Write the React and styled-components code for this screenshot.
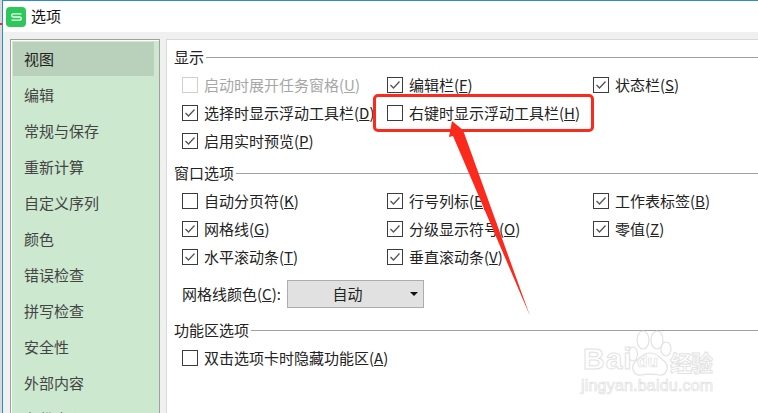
import styled, { createGlobalStyle } from 'styled-components'

const GlobalStyle = createGlobalStyle`
  html, body {
    margin: 0;
    padding: 0;
    background: #fff;
  }
  body {
    width: 758px;
    height: 413px;
    overflow: hidden;
    font-family: "Noto Sans CJK SC", "Noto Sans", sans-serif;
    font-size: 15px;
    color: #222;
  }
`

const Desktop = styled.div`
  position: relative;
  width: 758px;
  height: 413px;
  overflow: hidden;
  display: flex;
  background: #d9d9d9;
`

const DesktopTick = styled.span`
  position: absolute;
  left: 0;
  top: 23px;
  width: 2px;
  height: 2px;
  background: #e8302a;
`

const Window = styled.div`
  flex: 1;
  margin-left: 2px;
  display: flex;
  flex-direction: column;
  border-left: 1px solid #2a8ad4;
  border-top: 1px solid #2a8ad4;
  background: #f0f0f0;
  min-width: 0;
`

const TitleBar = styled.div`
  height: 31px;
  flex: none;
  display: flex;
  align-items: center;
  gap: 5px;
  padding-left: 3px;
  background: #fff;
  color: #111;
`

const Logo = styled.div`
  width: 20px;
  height: 20px;
  border-radius: 4px;
  background: #2fc65c;
  display: flex;
  align-items: center;
  justify-content: center;
`

const Main = styled.div`
  flex: 1;
  display: flex;
  gap: 6px;
  padding: 7px 0 0 7px;
  min-height: 0;
`

const Sidebar = styled.div`
  box-sizing: border-box;
  width: 150px;
  flex: none;
  border: 1px solid #a0a0a0;
  border-bottom: none;
  background: #cce8cf;
  box-shadow: inset 1px 1px 0 #fff;
  padding: 2px 2px 0 2px;
  overflow: hidden;
`

const SideItem = styled.div`
  height: 34px;
  margin: 0 3px 2px 0;
  padding: 0 0 2px 11px;
  box-sizing: border-box;
  display: flex;
  align-items: center;
  color: ${p => (p.$active ? '#222' : '#444')};
  background: ${p => (p.$active ? '#b9d1ba' : 'transparent')};
  white-space: nowrap;
`

const Panel = styled.div`
  flex: 1;
  min-width: 0;
  background: #fff;
  border-top: 1px solid #d8d8d8;
  border-left: 1px solid #d8d8d8;
  padding: 8px 0 0 7px;
`

const Heading = styled.div`
  height: 18px;
  margin-top: ${p => p.$top || 0}px;
  display: flex;
  align-items: center;
  gap: 2px;
  white-space: nowrap;
  &::after {
    content: '';
    flex: 1;
    height: 1px;
    background: #a0a0a0;
  }
`

const HeadingText = styled.span`
  padding-bottom: 2px;
`

const OptionGrid = styled.div`
  display: grid;
  grid-template-columns: 205px 206px 1fr;
  grid-auto-rows: 28px;
  margin-top: 5px;
  padding-left: 8px;
`

const Option = styled.div`
  display: flex;
  align-items: center;
  gap: 6px;
  white-space: nowrap;
  color: ${p => (p.$disabled ? '#a6a6a6' : '#222')};
`

const OptionText = styled.span`
  padding-bottom: 2px;
`

const Box = styled.span`
  width: 14px;
  height: 14px;
  flex: none;
  border: 1px solid ${p => (p.$disabled ? '#cfcfcf' : '#3c3c3c')};
  background: #fff;
  display: flex;
  align-items: center;
  justify-content: center;
`

const ColorRow = styled.div`
  display: flex;
  align-items: center;
  height: 28px;
  margin-top: 9px;
  padding-left: 8px;
  white-space: nowrap;
`

const Select = styled.div`
  position: relative;
  width: 119px;
  height: 26px;
  margin-left: 6px;
  border: 1px solid #adadad;
  background: #e1e1e1;
  display: flex;
  align-items: center;
  justify-content: center;
  padding-right: 16px;
`

const Caret = styled.span`
  position: absolute;
  right: 5px;
  top: 11px;
  width: 0;
  height: 0;
  border-left: 4px solid transparent;
  border-right: 4px solid transparent;
  border-top: 4px solid #111;
`

const Highlight = styled.div`
  position: absolute;
  left: 373px;
  top: 94px;
  width: 215px;
  height: 32px;
  border: 3px solid #fb2a1c;
  border-radius: 5px;
`

const Arrow = styled.svg`
  position: absolute;
  left: 0;
  top: 0;
  pointer-events: none;
`

const Watermark = styled.div`
  position: absolute;
  left: 581px;
  top: 330px;
  width: 140px;
  height: 70px;
  color: #fff;
  -webkit-text-stroke: 1px #e2e2e2;
  font-family: "Liberation Sans", sans-serif;
`

const MarkBai = styled.span`
  position: absolute;
  left: 2px;
  top: 12px;
  font-size: 30px;
  font-weight: 700;
  letter-spacing: 1px;
`

const MarkDu = styled.span`
  position: absolute;
  left: 56px;
  top: 22px;
  font-size: 17px;
  font-weight: 700;
  -webkit-text-stroke: 0.7px #e2e2e2;
`

const MarkCn = styled.span`
  position: absolute;
  left: 89px;
  top: 15px;
  font-family: "Noto Sans CJK SC", sans-serif;
  font-size: 22px;
  font-weight: 700;
  white-space: nowrap;
  letter-spacing: -1px;
`

const MarkUrl = styled.span`
  position: absolute;
  left: 0;
  top: 47px;
  font-size: 16px;
  letter-spacing: 0.2px;
  -webkit-text-stroke: 0.7px #e0e0e0;
  white-space: nowrap;
`

const Paw = styled.svg`
  position: absolute;
  left: 44px;
  top: 0;
`

const sideItems = ['视图', '编辑', '常规与保存', '重新计算', '自定义序列', '颜色', '错误检查', '拼写检查', '安全性', '外部内容', '备份中心']

function Check() {
  return (
    <svg width="12" height="10" viewBox="0 0 12 10">
      <path d="M1.5 5 L4.5 8 L10.5 1.5" fill="none" stroke="#555" strokeWidth="1.3" />
    </svg>
  )
}

// label + hotkey, the hotkey letter is underlined
function Item({ label, k, checked, disabled }) {
  return (
    <Option $disabled={disabled}>
      <Box $disabled={disabled}>{checked && <Check />}</Box>
      <OptionText>{label}(<u>{k}</u>)</OptionText>
    </Option>
  )
}

export default function App() {
  return (
    <>
      <GlobalStyle />
      <Desktop>
        <DesktopTick />
        <Window>
          <TitleBar>
            <Logo>
              <svg width="11" height="8" viewBox="0 0 11 8">
                <path d="M10.5 .8 H2.5 Q.7 .8 .7 2.4 Q.7 4 2.5 4 H8.5 Q10.3 4 10.3 5.6 Q10.3 7.2 8.5 7.2 H.5" fill="none" stroke="#e8fff0" strokeWidth="1.3" />
              </svg>
            </Logo>
            <OptionText>选项</OptionText>
          </TitleBar>
          <Main>
            <Sidebar>
              {sideItems.map((s, i) => (
                <SideItem key={s} $active={i === 0}>{s}</SideItem>
              ))}
            </Sidebar>
            <Panel>
              <Heading><HeadingText>显示</HeadingText></Heading>
              <OptionGrid>
                <Item label="启动时展开任务窗格" k="U" disabled />
                <Item label="编辑栏" k="F" checked />
                <Item label="状态栏" k="S" checked />
                <Item label="选择时显示浮动工具栏" k="D" checked />
                <Item label="右键时显示浮动工具栏" k="H" />
                <span />
                <Item label="启用实时预览" k="P" checked />
              </OptionGrid>
              <Heading $top={9}><HeadingText>窗口选项</HeadingText></Heading>
              <OptionGrid>
                <Item label="自动分页符" k="K" />
                <Item label="行号列标" k="E" checked />
                <Item label="工作表标签" k="B" checked />
                <Item label="网格线" k="G" checked />
                <Item label="分级显示符号" k="O" checked />
                <Item label="零值" k="Z" checked />
                <Item label="水平滚动条" k="T" checked />
                <Item label="垂直滚动条" k="V" checked />
              </OptionGrid>
              <ColorRow>
                <OptionText>网格线颜色(<u>C</u>):</OptionText>
                <Select>
                  <OptionText>自动</OptionText>
                  <Caret />
                </Select>
              </ColorRow>
              <Heading $top={13}><HeadingText>功能区选项</HeadingText></Heading>
              <OptionGrid>
                <Item label="双击选项卡时隐藏功能区" k="A" />
              </OptionGrid>
            </Panel>
          </Main>
        </Window>
        <Highlight />
        <Arrow width="758" height="413" viewBox="0 0 758 413">
          <path d="M452 121 L463 130 L530 316 L453 136 L449 137 Z" fill="#fb2a1c" />
        </Arrow>
        <Watermark>
          <Paw width="56" height="56" viewBox="0 0 56 56">
            <g fill="#fff" stroke="#e2e2e2" strokeWidth="1.2">
              <ellipse cx="8" cy="24" rx="4.5" ry="7" />
              <ellipse cx="18" cy="10" rx="6" ry="9" />
              <ellipse cx="32" cy="10" rx="6" ry="9" />
              <ellipse cx="41" cy="19" rx="5" ry="7" />
              <path d="M25 23 C32 23 35 28 39 31 C45 36 42 46 34 45 C29 44 21 44 16 45 C8 46 5 36 11 31 C15 28 18 23 25 23 Z" />
            </g>
          </Paw>
          <MarkBai>Bai</MarkBai>
          <MarkDu>du</MarkDu>
          <MarkCn>经验</MarkCn>
          <MarkUrl>jingyan.baidu.com</MarkUrl>
        </Watermark>
      </Desktop>
    </>
  )
}
